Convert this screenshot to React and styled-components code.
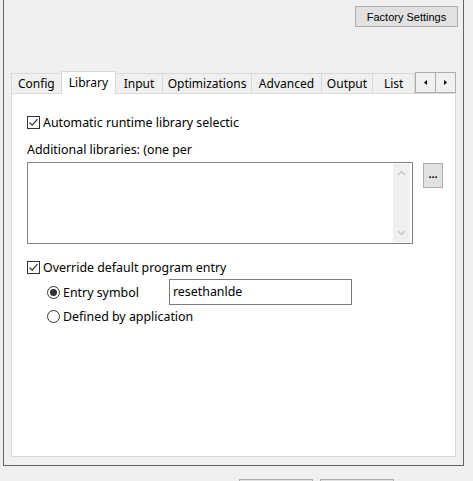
import styled, { createGlobalStyle } from "styled-components";

const GlobalStyle = createGlobalStyle`
  html, body {
    margin: 0;
    padding: 0;
    background: #f0f0f0;
  }
  body {
    width: 473px;
    height: 481px;
    overflow: hidden;
    font-family: "Noto Sans", "Noto Sans CJK SC", sans-serif;
    font-size: 12px;
    color: #000;
  }
`;

const tabs = [
  { label: "Config", w: 51 },
  { label: "Library", w: 56, active: true },
  { label: "Input", w: 48 },
  { label: "Optimizations", w: 91 },
  { label: "Advanced", w: 71 },
  { label: "Output", w: 53 },
  { label: "List", w: 43 },
];

export default function App() {
  return (
    <Page>
      <GlobalStyle />
      <Frame>
        <TopBar>
          <ClassicButton>Factory Settings</ClassicButton>
        </TopBar>

        <TabStrip>
          {tabs.map((t) => (
            <Tab key={t.label} $w={t.w} $active={t.active}>
              {t.label}
            </Tab>
          ))}
          <Spinner>
            <SpinButton>
              <svg width="3" height="5" viewBox="0 0 3 5">
                <path d="M3 0 L0 2.5 L3 5 Z" fill="#000" />
              </svg>
            </SpinButton>
            <SpinButton>
              <svg width="3" height="5" viewBox="0 0 3 5">
                <path d="M0 0 L3 2.5 L0 5 Z" fill="#000" />
              </svg>
            </SpinButton>
          </Spinner>
        </TabStrip>

        <Panel>
          <CheckRow $top={22}>
            <CheckBox>
              <Tick />
            </CheckBox>
            <span>Automatic runtime library selectic</span>
          </CheckRow>

          <FieldLabel>Additional libraries: (one per</FieldLabel>

          <ListRow>
            <ListBox>
              <ListArea />
              <ScrollBar>
                <svg width="9" height="6" viewBox="0 0 9 6">
                  <path d="M1 5 L4.5 1.5 L8 5" stroke="#c4c4c4" strokeWidth="1.4" fill="none" />
                </svg>
                <svg width="9" height="6" viewBox="0 0 9 6">
                  <path d="M1 1 L4.5 4.5 L8 1" stroke="#c4c4c4" strokeWidth="1.4" fill="none" />
                </svg>
              </ScrollBar>
            </ListBox>
            <DotsButton>...</DotsButton>
          </ListRow>

          <CheckRow $top={17}>
            <CheckBox>
              <Tick />
            </CheckBox>
            <span>Override default program entry</span>
          </CheckRow>

          <EntryRow>
            <RadioOption>
              <Radio $checked />
              <span>Entry symbol</span>
            </RadioOption>
            <TextInput>resethanlde</TextInput>
          </EntryRow>

          <RadioLine>
            <RadioOption>
              <Radio />
              <span>Defined by application</span>
            </RadioOption>
          </RadioLine>
        </Panel>
      </Frame>

      <BottomBar>
        <FooterButton />
        <FooterButton />
      </BottomBar>
    </Page>
  );
}

function Tick() {
  return (
    <svg width="11" height="11" viewBox="0 0 11 11">
      <path d="M1.5 5.5 L4.2 8.2 L9.5 2.2" stroke="#333" strokeWidth="1.2" fill="none" />
    </svg>
  );
}

const Page = styled.div`
  width: 473px;
  height: 481px;
  display: flex;
  flex-direction: column;
  overflow: hidden;
`;

const Frame = styled.div`
  box-sizing: border-box;
  width: 461px;
  height: 466px;
  flex-shrink: 0;
  margin-left: 3px;
  border: 1px solid #646464;
  border-top: none;
  display: flex;
  flex-direction: column;
`;

const TopBar = styled.div`
  display: flex;
  justify-content: flex-end;
  padding: 6px 5px 0 0;
`;

const ClassicButton = styled.div`
  box-sizing: border-box;
  width: 103px;
  height: 21px;
  background: #e1e1e1;
  border: 1px solid #adadad;
  font-family: "Liberation Sans", Arial, sans-serif;
  font-size: 11px;
  display: flex;
  align-items: center;
  justify-content: center;
`;

const TabStrip = styled.div`
  display: flex;
  align-items: flex-end;
  margin: 44px 7px 0 7px;
  height: 22px;
  flex-shrink: 0;
`;

const Tab = styled.div`
  box-sizing: border-box;
  width: ${({ $w }) => $w}px;
  height: ${({ $active }) => ($active ? 23 : 20)}px;
  margin-left: -1px;
  margin-bottom: ${({ $active }) => ($active ? -1 : 0)}px;
  &:first-child {
    margin-left: 0;
  }
  border: 1px solid #d9d9d9;
  border-bottom: none;
  background: ${({ $active }) => ($active ? "#fff" : "#f0f0f0")};
  position: relative;
  z-index: ${({ $active }) => ($active ? 1 : 0)};
  display: flex;
  align-items: center;
  justify-content: center;
  padding-bottom: ${({ $active }) => ($active ? 2 : 0)}px;
  white-space: nowrap;
  overflow: hidden;
`;

const Spinner = styled.div`
  display: flex;
  flex-shrink: 0;
  position: relative;
  z-index: 2;
`;

const SpinButton = styled.div`
  box-sizing: border-box;
  width: 21px;
  height: 21px;
  margin-left: -1px;
  &:first-child {
    margin-left: 0;
  }
  border: 1px solid #adadad;
  background: #f0f0f0;
  display: flex;
  align-items: center;
  justify-content: center;
`;

const Panel = styled.div`
  flex: 1;
  margin: 0 7px 8px 7px;
  background: #fff;
  border: 1px solid #d9d9d9;
  padding-left: 15px;
  display: flex;
  flex-direction: column;
  font-size: 12.4px;
`;

const CheckRow = styled.div`
  display: flex;
  align-items: center;
  gap: 3px;
  height: 13px;
  margin-top: ${({ $top }) => $top}px;
  white-space: nowrap;
`;

const CheckBox = styled.span`
  box-sizing: border-box;
  width: 13px;
  height: 13px;
  border: 1px solid #333;
  background: #fff;
  display: flex;
  align-items: center;
  justify-content: center;
  flex-shrink: 0;
`;

const FieldLabel = styled.div`
  height: 16px;
  line-height: 16px;
  margin-top: 13px;
`;

const ListRow = styled.div`
  display: flex;
  align-items: flex-start;
  margin-top: 4px;
`;

const ListBox = styled.div`
  box-sizing: border-box;
  width: 386px;
  height: 82px;
  border: 1px solid #828282;
  padding: 1px 2px 1px 1px;
  display: flex;
  background: #fff;
`;

const ListArea = styled.div`
  flex: 1;
`;

const ScrollBar = styled.div`
  width: 17px;
  background: #f0f0f0;
  display: flex;
  flex-direction: column;
  align-items: center;
  justify-content: space-between;
  padding: 6px 0;
  box-sizing: border-box;
`;

const DotsButton = styled.div`
  box-sizing: border-box;
  width: 20px;
  height: 25px;
  margin: 1px 0 0 10px;
  background: #e1e1e1;
  border: 1px solid #adadad;
  font-family: "Liberation Sans", Arial, sans-serif;
  font-size: 11px;
  font-weight: bold;
  display: flex;
  align-items: center;
  justify-content: center;
  padding-bottom: 3px;
`;

const EntryRow = styled.div`
  display: flex;
  align-items: center;
  margin-top: 5px;
  padding-left: 20px;
  height: 26px;
`;

const RadioLine = styled.div`
  display: flex;
  align-items: center;
  padding-left: 20px;
  margin-top: 3px;
  height: 16px;
`;

const RadioOption = styled.label`
  width: 122px;
  display: flex;
  align-items: center;
  gap: 3px;
  white-space: nowrap;
`;

const Radio = styled.span`
  box-sizing: border-box;
  width: 13px;
  height: 13px;
  border-radius: 50%;
  border: 1px solid #333;
  background: #fff;
  flex-shrink: 0;
  display: flex;
  align-items: center;
  justify-content: center;
  &::after {
    content: "";
    width: 7px;
    height: 7px;
    border-radius: 50%;
    background: #333;
    display: ${({ $checked }) => ($checked ? "block" : "none")};
  }
`;

const TextInput = styled.div`
  box-sizing: border-box;
  width: 183px;
  height: 26px;
  border: 1px solid #7a7a7a;
  padding: 0 3px;
  display: flex;
  align-items: center;
  padding-bottom: 2px;
`;

const BottomBar = styled.div`
  display: flex;
  flex-shrink: 0;
  gap: 7px;
  margin: 13px 0 0 239px;
`;

const FooterButton = styled.div`
  box-sizing: border-box;
  width: 74px;
  height: 23px;
  background: #e1e1e1;
  border: 1px solid #adadad;
`;
